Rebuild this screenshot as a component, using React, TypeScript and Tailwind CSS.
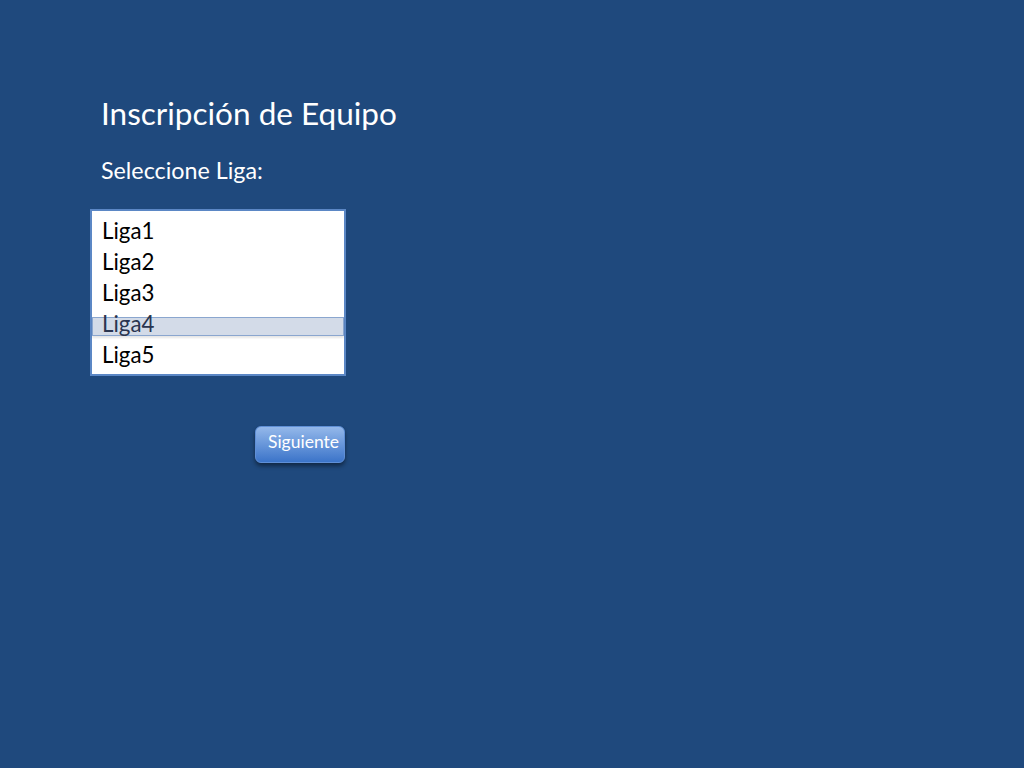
export default function App() {
  const ligas = ['Liga1', 'Liga2', 'Liga3', 'Liga4', 'Liga5']
  return (
    <div
      className="w-[1024px] h-[768px] bg-[#1f497d] overflow-hidden"
      style={{ fontFamily: 'Lato, "Open Sans", sans-serif' }}
    >
      <div className="pl-[101px] pt-[94px]">
        <h1 className="text-[31.5px] leading-[38px] text-white">Inscripción de Equipo</h1>
        <p className="mt-[23px] text-[23.3px] leading-[30px] text-white">Seleccione Liga:</p>
      </div>
      <div className="ml-[90px] mt-[24px] w-[256px] h-[167px] border-2 border-[#5b87c5] bg-white pt-[4px]">
        {ligas.map((l) => (
          <div
            key={l}
            className={
              l === 'Liga4'
                ? 'h-[19px] mt-[9px] mb-[3px] bg-[#d3dbe8] border border-[#8aa6cf] shadow-[0_2px_2px_rgba(0,0,0,0.1)] flex items-center pb-[5px] pl-[9px] text-[22.3px] text-[#2a3550]'
                : 'h-[31px] flex items-center pl-[10px] text-[22.3px] text-black'
            }
          >
            {l}
          </div>
        ))}
      </div>
      <div className="ml-[255px] mt-[50px] w-[90px] h-[37px] rounded-[6px] bg-gradient-to-b from-[#94b8ea] to-[#3b74c9] border border-[#5f8fd6] shadow-[0_3px_4px_rgba(0,0,0,0.45)] flex items-center justify-end pr-[5px] pb-[5px] text-[17.5px] text-white">
        Siguiente
      </div>
    </div>
  )
}
